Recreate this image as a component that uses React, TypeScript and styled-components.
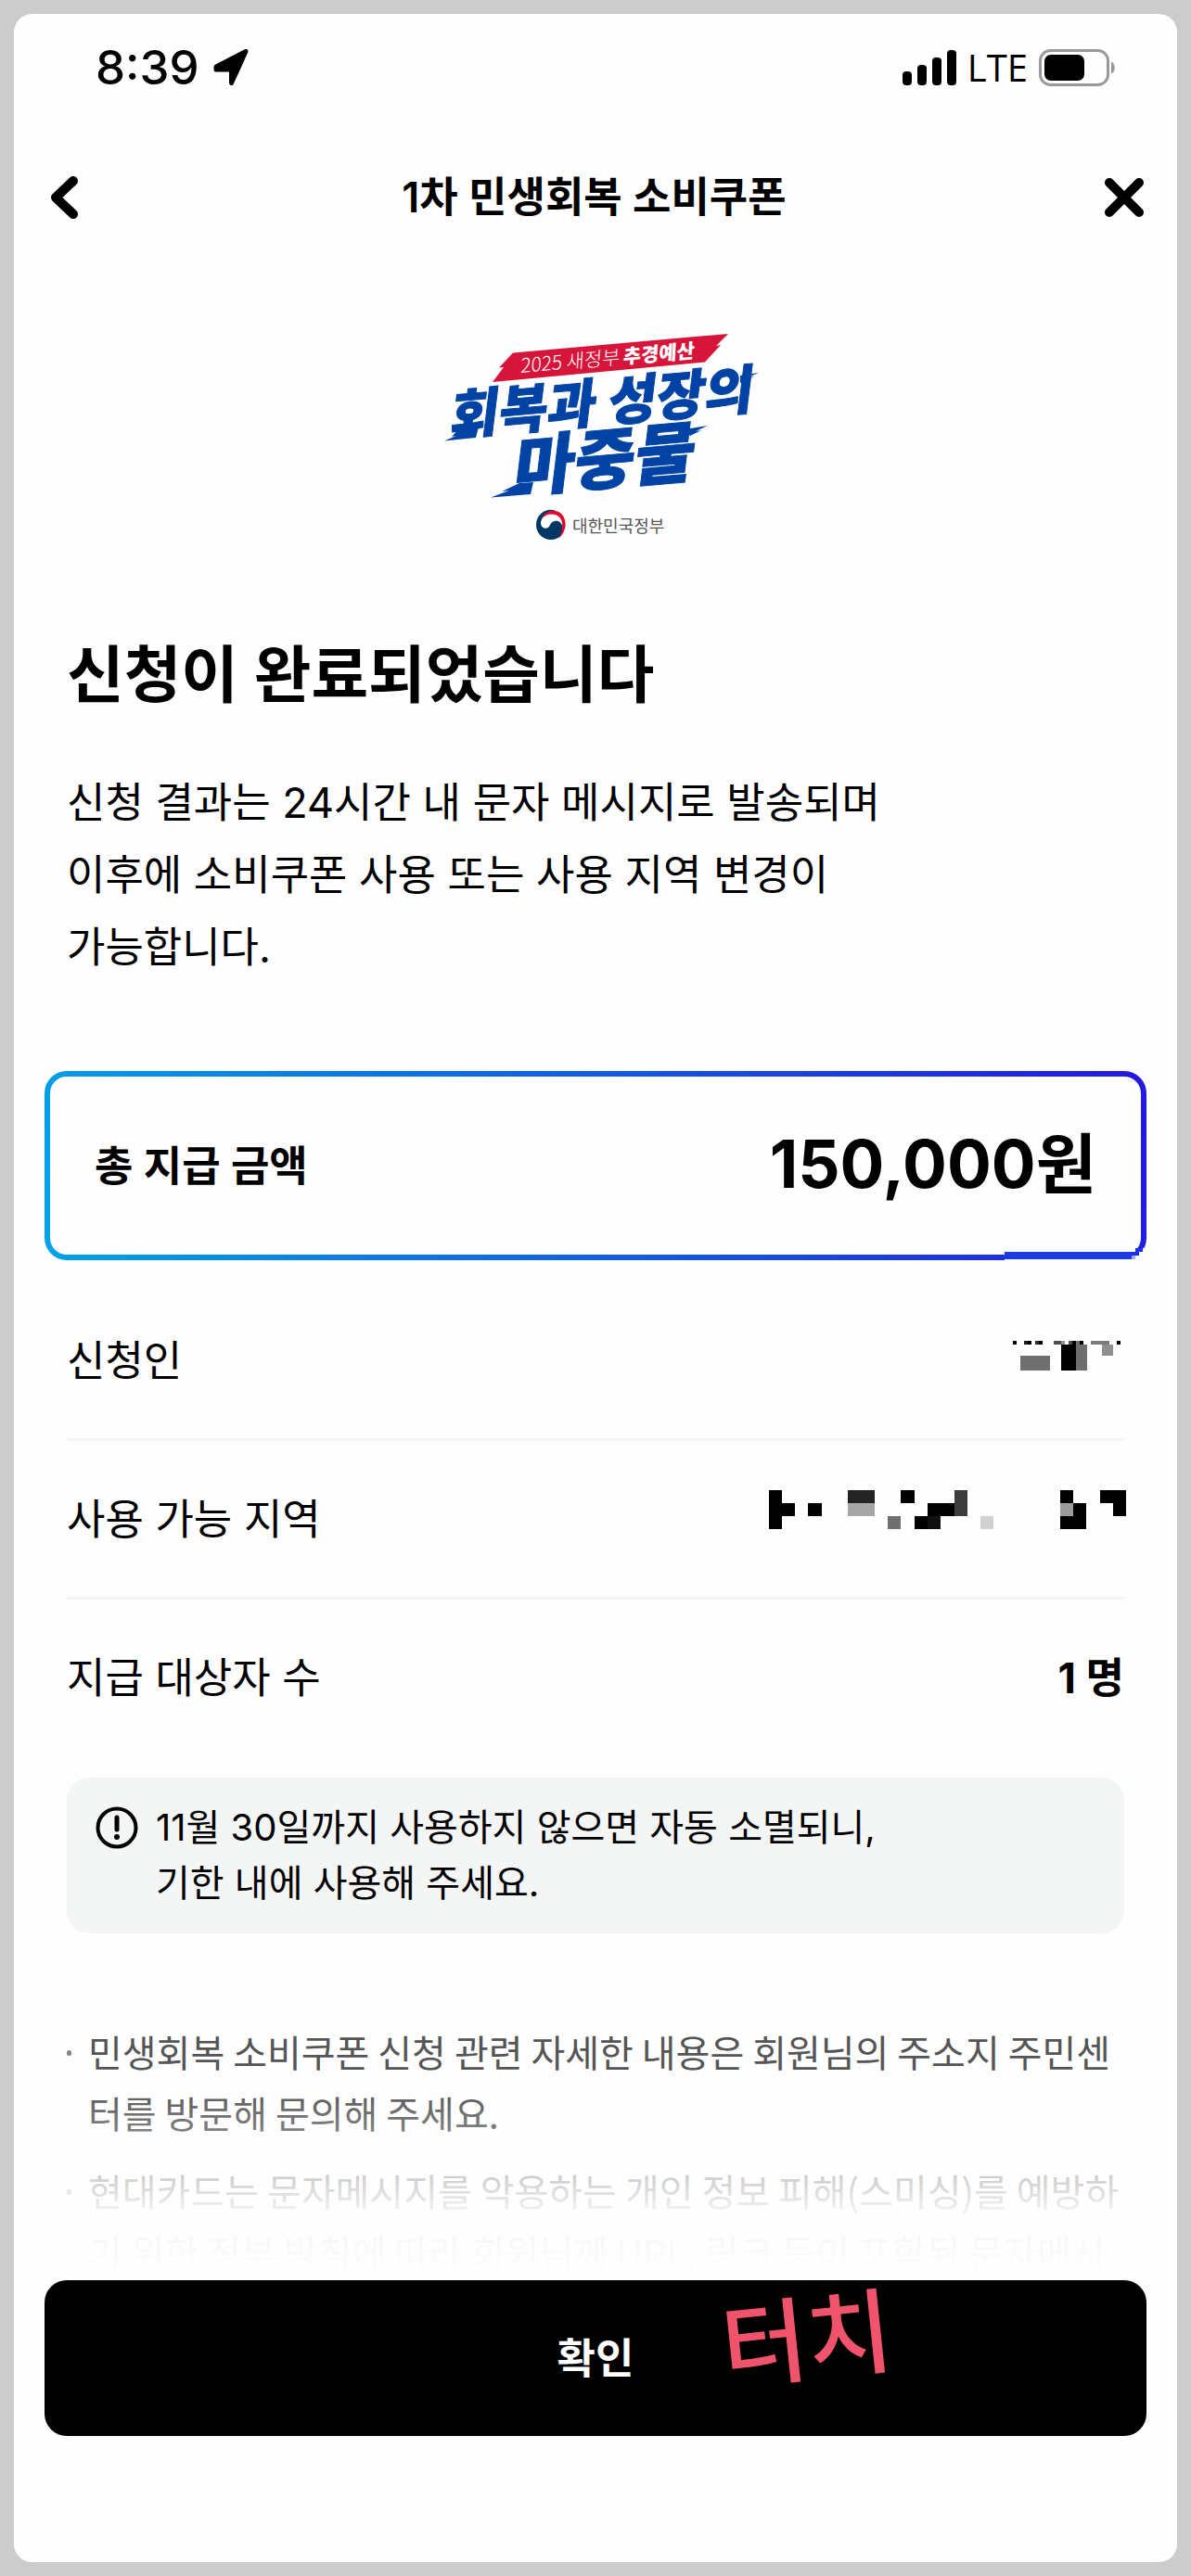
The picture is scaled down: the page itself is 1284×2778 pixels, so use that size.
import React from "react";
import styled, { createGlobalStyle, css } from "styled-components";

const sans = `Inter, "Noto Sans CJK KR", sans-serif`;

const GlobalStyle = createGlobalStyle`
  *, *::before, *::after { box-sizing: border-box; }
  body { margin: 0; background: #cbcccb; }
  h1, h2, p, ul, dl, dd, dt { margin: 0; padding: 0; font-weight: inherit; }
  ul { list-style: none; }
  button { border: 0; padding: 0; font: inherit; color: inherit; background: none; cursor: pointer; }
`;

const Frame = styled.div`
  min-height: 100vh;
  padding: 15px;
  display: flex;
  background: #cbcccb;
  font-family: ${sans};
  color: #000;
`;

const Screen = styled.div`
  flex: 1;
  min-width: 0;
  display: flex;
  flex-direction: column;
  background: #fefefe;
  border-radius: 20px;
  overflow: hidden;
`;

const StatusBar = styled.header`
  height: 116px;
  padding: 0 66px 0 88px;
  display: flex;
  align-items: center;
  justify-content: space-between;
`;

const StatusGroup = styled.div<{ $gap: number }>`
  display: flex;
  align-items: center;
  gap: ${(p) => p.$gap}px;
`;

const Clock = styled.time`
  font-size: 51px;
  line-height: 60px;
  font-weight: 500;
`;

const Network = styled.span`
  font-family: "Open Sans", sans-serif;
  font-size: 40px;
  line-height: 60px;
  font-weight: 500;
`;

const NavBar = styled.nav`
  height: 164px;
  padding: 0 27px 0 24px;
  display: flex;
  align-items: center;
  justify-content: space-between;
`;

const NavButton = styled.button`
  width: 60px;
  height: 60px;
  display: flex;
  align-items: center;
  justify-content: center;
`;

const NavTitle = styled.h1`
  font-size: 45px;
  line-height: 60px;
  font-weight: 600;
`;

const Content = styled.main`
  padding: 60px 33px 0;
`;

const LogoArea = styled.div`
  display: flex;
  justify-content: center;
`;

const Block = styled.section`
  padding: 0 24px;
`;

const Heading = styled.h2`
  margin-top: 98px;
  font-size: 67px;
  line-height: 90px;
  font-weight: 600;
`;

const Description = styled.p`
  margin-top: 54px;
  font-size: 45px;
  line-height: 78px;
`;

const TotalCard = styled.section`
  position: relative;
  margin-top: 94px;
  height: 204px;
  padding: 0 48px;
  display: flex;
  align-items: center;
  justify-content: space-between;
  border: 6px solid transparent;
  border-radius: 24px;
  background:
    linear-gradient(#fefefe, #fefefe) padding-box,
    linear-gradient(75deg, #00a3e8, #2318e0) border-box;
`;

const TotalLabel = styled.span`
  padding-top: 2px;
  font-size: 45px;
  line-height: 60px;
  font-weight: 600;
`;

const TotalAmount = styled.strong`
  padding-bottom: 4px;
  font-size: 71px;
  line-height: 90px;
  font-weight: 700;
`;

const CornerPatch = styled.svg`
  position: absolute;
  right: -6px;
  bottom: -6px;
`;

const Details = styled.dl`
  margin-top: 24px;
`;

const DetailRow = styled.div`
  display: flex;
  align-items: center;
  justify-content: space-between;
  height: 168px;
  font-size: 45px;
  line-height: 60px;

  & + & {
    border-top: 3px solid #f3f5f4;
    height: 171px;
  }
`;

const DetailLabel = styled.dt`
  padding-top: 2px;
`;

const DetailValue = styled.dd`
  padding-top: 2px;
  display: flex;
  font-weight: 700;
`;

const Notice = styled.aside`
  margin-top: 24px;
  padding: 24px 30px;
  display: flex;
  gap: 18px;
  border-radius: 24px;
  background: #f4f5f5;
  font-size: 40px;
  line-height: 60px;

  svg {
    flex: none;
    margin-top: 6px;
  }
`;

const Footnotes = styled.ul`
  margin-top: 94px;
  display: flex;
  flex-direction: column;
  gap: 18px;
  color: #555;
  font-family: "Noto Sans CJK KR", sans-serif;
  font-size: 40px;
  line-height: 66px;
`;

const Footnote = styled.li`
  display: flex;
  gap: 18px;
  white-space: nowrap;

  &::before {
    content: "";
    flex: none;
    width: 5px;
    height: 6px;
    margin-top: 32px;
    border-radius: 3px;
    background: #858585;
  }
`;

const Footer = styled.footer`
  position: relative;
  margin-top: -2px;
  padding: 0 33px 135px;
  background: #fefefe;

  &::before {
    content: "";
    position: absolute;
    left: 0;
    right: 0;
    bottom: 100%;
    height: 210px;
    background: linear-gradient(
      rgba(254, 254, 254, 0) 0,
      rgba(254, 254, 254, 0.24) 46px,
      rgba(254, 254, 254, 0.7) 95px,
      rgba(254, 254, 254, 0.9) 132px,
      rgba(254, 254, 254, 0.97) 170px,
      #fefefe 210px
    );
    pointer-events: none;
  }
`;

const ConfirmButton = styled.button`
  width: 100%;
  height: 168px;
  padding-top: 2px;
  border-radius: 24px;
  background: #000;
  color: #fff;
  font-size: 45px;
  line-height: 60px;
  font-weight: 600;
`;

const TouchMark = styled.span`
  position: absolute;
  left: calc(50% + 136px);
  top: 4px;
  color: #f0546c;
  font-size: 100px;
  line-height: 120px;
  font-weight: 500;
  transform: rotate(-6deg);
  pointer-events: none;
`;

const logoText = css`
  font-family: "Noto Sans CJK KR", sans-serif;
`;

const LogoLetters = styled.text<{ $size: number; $weight: number; $fill: string; $stroke?: number }>`
  ${logoText}
  font-size: ${(p) => p.$size}px;
  font-weight: ${(p) => p.$weight};
  fill: ${(p) => p.$fill};
  stroke: ${(p) => p.$fill};
  stroke-width: ${(p) => p.$stroke ?? 0}px;
`;

function CampaignLogo() {
  return (
    <svg width="350" height="230" viewBox="467 355 350 230" overflow="visible" role="img" aria-label="회복과 성장의 마중물">
      <path d="M553 380.500L785 360L772 373L777 372L760 390.500L531 412L543 396L538 396.500Z" fill="#d7153a" />
      <g transform="translate(561 402) rotate(-5) skewX(-8)">
        <LogoLetters $size={21} $weight={300} $fill="#fff">2025 새정부</LogoLetters>
        <LogoLetters x="111" $size={21} $weight={900} $fill="#fff">추경예산</LogoLetters>
      </g>
      <g transform="translate(484 469) rotate(-5) skewX(-12)">
        <LogoLetters $size={57} $weight={900} $fill="#0043a5" $stroke={1}>회복과 성장의</LogoLetters>
      </g>
      <g transform="translate(552 530) rotate(-5) skewX(-12)">
        <LogoLetters $size={71} $weight={900} $fill="#0043a5" $stroke={1}>마중물</LogoLetters>
      </g>
      <g fill="#0043a5">
        <path d="M479 475.500L492 470L487 471L496 461L516 460L513 472Z" />
        <path d="M529 536.500L549 529L541 530L560 521L575 520L572 533Z" />
        <path d="M798 405L818 402L806 407L813 406L798 413Z" />
        <path d="M738 463L763 459L750 465L756 464L744 470Z" />
      </g>
      <path d="M599 550.500C588 547 578 555 578 566C578 575 585 582 594 582C603 582 608.500 575 606.500 568C604.500 560 596 560 593 566C591 571.500 584 571 583 565C583 557 590 551 599 550.500Z" fill="#003764" />
      <path d="M583.500 560C587 551 598 547.500 605 554C612 561 611 573 602 581C607 573 608 563 603 557.500C598 553 589 553 583.500 560Z" fill="#e4032e" />
      <LogoLetters x="617" y="574" $size={18} $weight={400} $fill="#555">대한민국정부</LogoLetters>
    </svg>
  );
}

type Cell = [x: number, y: number, w: number, h: number, fill: string];

function Mosaic({ x, y, width, height, cells }: { x: number; y: number; width: number; height: number; cells: Cell[] }) {
  return (
    <svg width={width} height={height} viewBox={`${x} ${y} ${width} ${height}`} overflow="visible" shapeRendering="crispEdges" aria-hidden="true">
      {cells.map(([cx, cy, w, h, fill], i) => (
        <rect key={i} x={cx} y={cy} width={w} height={h} fill={fill} />
      ))}
    </svg>
  );
}

const nameCells: Cell[] = [
  [1092, 1446, 4, 4, "#000"], [1104, 1446, 4, 4, "#1c1c1c"], [1108, 1446, 4, 4, "#000"],
  [1116, 1446, 4, 4, "#2c2c2c"], [1120, 1446, 4, 4, "#000"], [1136, 1446, 8, 4, "#505050"],
  [1144, 1446, 4, 4, "#929292"], [1152, 1446, 4, 4, "#505050"], [1156, 1446, 4, 4, "#000"],
  [1160, 1446, 4, 4, "#707070"], [1164, 1446, 4, 4, "#000"], [1176, 1446, 20, 4, "#7a7a7a"],
  [1204, 1446, 4, 4, "#000"], [1100, 1462, 32, 16, "#707070"], [1144, 1450, 16, 28, "#000"],
  [1160, 1450, 12, 28, "#6e6e6e"], [1188, 1450, 12, 12, "#909090"],
];

const regionCells: Cell[] = [
  [829, 1607, 14, 42, "#000"], [843, 1621, 14, 14, "#000"], [871, 1621, 15, 14, "#000"],
  [914, 1607, 29, 14, "#242424"], [914, 1621, 29, 14, "#a6a6a6"], [957, 1635, 14, 14, "#707070"],
  [971, 1607, 15, 14, "#000"], [986, 1635, 14, 14, "#000"], [1000, 1635, 14, 14, "#101010"],
  [1000, 1621, 29, 14, "#000"], [1029, 1607, 14, 28, "#3c3c3c"], [1057, 1635, 14, 14, "#d1d1d1"],
  [1143, 1607, 14, 14, "#000"], [1143, 1621, 14, 14, "#9c9c9c"], [1157, 1621, 14, 14, "#000"],
  [1143, 1635, 28, 14, "#000"], [1186, 1607, 28, 14, "#000"], [1200, 1621, 14, 14, "#000"],
];

export default function App() {
  return (
    <>
      <GlobalStyle />
      <Frame>
        <Screen>
          <StatusBar>
            <StatusGroup $gap={14}>
              <Clock>8:39</Clock>
              <svg width="42" height="40" viewBox="0 0 42 40" aria-hidden="true">
                <path d="M4 19L36 2.500L20.500 36.500V22H4Z" stroke="#000" strokeWidth="5" strokeLinejoin="round" />
              </svg>
            </StatusGroup>
            <StatusGroup $gap={12}>
              <svg width="58" height="38" viewBox="0 0 58 38" aria-hidden="true">
                <rect x="0" y="23" width="10" height="15" rx="4" />
                <rect x="16" y="16" width="10" height="22" rx="4" />
                <rect x="32" y="8" width="10" height="30" rx="4" />
                <rect x="48" y="0" width="10" height="38" rx="4" />
              </svg>
              <Network>LTE</Network>
              <svg width="83" height="40" viewBox="0 0 83 40" aria-hidden="true">
                <rect x="1.500" y="1.500" width="73" height="37" rx="11" fill="none" stroke="#999" strokeWidth="3" />
                <rect x="6" y="6" width="43" height="28" rx="7" />
                <path d="M78 13.500C83 15.500 83 24.500 78 26.500Z" fill="#999" />
              </svg>
            </StatusGroup>
          </StatusBar>

          <NavBar>
            <NavButton type="button" aria-label="뒤로">
              <svg width="44" height="60" viewBox="0 0 44 60" fill="none" aria-hidden="true">
                <path d="M32 12L13 30L32 48" stroke="#000" strokeWidth="10" strokeLinecap="round" strokeLinejoin="round" />
              </svg>
            </NavButton>
            <NavTitle>1차 민생회복 소비쿠폰</NavTitle>
            <NavButton type="button" aria-label="닫기">
              <svg width="60" height="60" viewBox="0 0 60 60" fill="none" aria-hidden="true">
                <path d="M14 14L46 46M46 14L14 46" stroke="#000" strokeWidth="10" strokeLinecap="round" />
              </svg>
            </NavButton>
          </NavBar>

          <Content>
            <LogoArea>
              <CampaignLogo />
            </LogoArea>

            <Block>
              <Heading>신청이 완료되었습니다</Heading>
              <Description>
                신청 결과는 24시간 내 문자 메시지로 발송되며
                <br />
                이후에 소비쿠폰 사용 또는 사용 지역 변경이
                <br />
                가능합니다.
              </Description>
            </Block>

            <TotalCard>
              <TotalLabel>총 지급 금액</TotalLabel>
              <TotalAmount>150,000원</TotalAmount>
              <CornerPatch width="153" height="14" viewBox="1083 1345 153 14" shapeRendering="crispEdges" aria-hidden="true">
                <rect x="1083" y="1346" width="153" height="13" fill="#fefefe" />
                <rect x="1083" y="1350" width="137" height="8" fill="#1c39e2" />
                <rect x="1220" y="1350" width="4" height="4" fill="#1c32e1" />
                <rect x="1220" y="1354" width="4" height="4" fill="#a3a8f0" />
                <rect x="1224" y="1346" width="4" height="8" fill="#1c32e1" />
                <rect x="1228" y="1346" width="4" height="4" fill="#1c32e1" />
              </CornerPatch>
            </TotalCard>

            <Block>
              <Details>
                <DetailRow>
                  <DetailLabel>신청인</DetailLabel>
                  <DetailValue>
                    <Mosaic x={1092} y={1446} width={120} height={44} cells={nameCells} />
                  </DetailValue>
                </DetailRow>
                <DetailRow>
                  <DetailLabel>사용 가능 지역</DetailLabel>
                  <DetailValue>
                    <Mosaic x={828} y={1607} width={384} height={64} cells={regionCells} />
                  </DetailValue>
                </DetailRow>
                <DetailRow>
                  <DetailLabel>지급 대상자 수</DetailLabel>
                  <DetailValue>1 명</DetailValue>
                </DetailRow>
              </Details>

              <Notice>
                <svg width="48" height="48" viewBox="0 0 48 48" fill="none" aria-hidden="true">
                  <circle cx="24" cy="24" r="20.500" stroke="#000" strokeWidth="4" />
                  <path d="M24 13V26" stroke="#000" strokeWidth="5" strokeLinecap="round" />
                  <circle cx="24" cy="34" r="3" fill="#000" />
                </svg>
                <p>
                  11월 30일까지 사용하지 않으면 자동 소멸되니,
                  <br />
                  기한 내에 사용해 주세요.
                </p>
              </Notice>

              <Footnotes>
                <Footnote>
                  <p>
                    민생회복 소비쿠폰 신청 관련 자세한 내용은 회원님의 주소지 주민센
                    <br />
                    터를 방문해 문의해 주세요.
                  </p>
                </Footnote>
                <Footnote>
                  <p>
                    현대카드는 문자메시지를 악용하는 개인 정보 피해(스미싱)를 예방하
                    <br />
                    기 위한 정부 방침에 따라 회원님께 URL, 링크 등이 포함된 문자메시
                  </p>
                </Footnote>
              </Footnotes>
            </Block>
          </Content>

          <Footer>
            <ConfirmButton type="button">확인</ConfirmButton>
            <TouchMark>터치</TouchMark>
          </Footer>
        </Screen>
      </Frame>
    </>
  );
}
